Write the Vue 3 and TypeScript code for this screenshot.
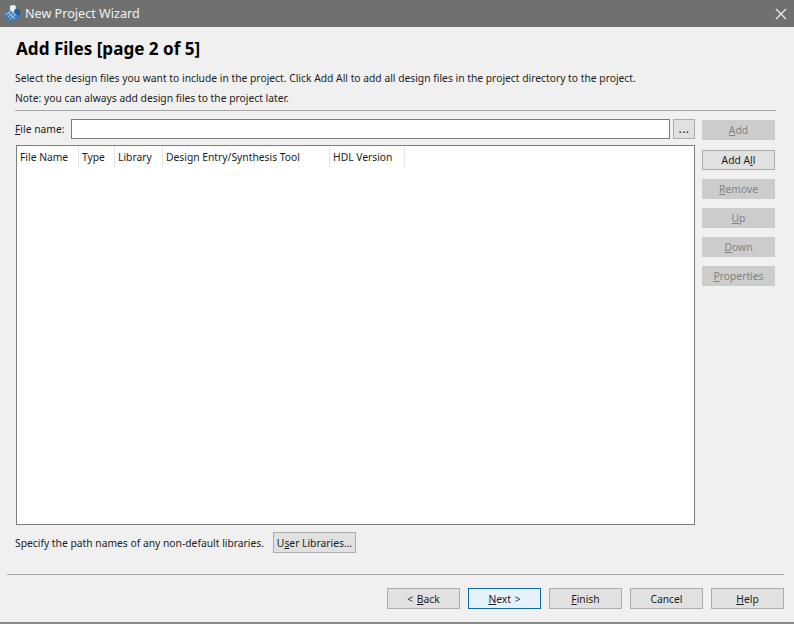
<script setup lang="ts">
interface Btn { pre?: string; key: string; post: string; disabled?: boolean }
const columns = [
  { label: 'File Name', width: 62 },
  { label: 'Type', width: 36 },
  { label: 'Library', width: 48 },
  { label: 'Design Entry/Synthesis Tool', width: 167 },
  { label: 'HDL Version', width: 75 },
]
const side: Btn[] = [
  { key: 'A', post: 'dd', disabled: true },
  { pre: 'Add A', key: 'l', post: 'l' },
  { key: 'R', post: 'emove', disabled: true },
  { key: 'U', post: 'p', disabled: true },
  { key: 'D', post: 'own', disabled: true },
  { key: 'P', post: 'roperties', disabled: true },
]
const footer: (Btn & { primary?: boolean })[] = [
  { pre: '< ', key: 'B', post: 'ack' },
  { key: 'N', post: 'ext >', primary: true },
  { key: 'F', post: 'inish' },
  { pre: 'Cancel', key: '', post: '' },
  { key: 'H', post: 'elp' },
]
</script>

<template>
  <div class="window">
    <header class="titlebar">
      <svg class="logo" width="20" height="20" viewBox="0 0 20 20">
        <path d="M1 11 L10 4 L18 12 L11 18 L7 17 Z" fill="#3f7dbd" />
        <path d="M3.5 11 L10 6 M6 13 L12 8 M8 15 L14 10 M6 8.500 L13 15 M9 6.500 L15 12" stroke="#b5d3ec" stroke-width="0.9" fill="none" />
        <path d="M8 1.500 L13 1 L15 6 L11 8 L8 6 Z" fill="#e9eff6" />
        <path d="M13 5 L16 4 L19 9 L16 13 L12 8 Z" fill="#2a5f9c" />
      </svg>
      <span class="title">New Project Wizard</span>
      <svg class="close" width="12" height="12" viewBox="0 0 12 12">
        <path d="M1 1 L11 11 M11 1 L1 11" stroke="#f2f2f2" stroke-width="1.1" fill="none" />
      </svg>
    </header>

    <main class="body">
      <h1 class="heading">Add Files [page 2 of 5]</h1>
      <p class="line first">Select the design files you want to include in the project. Click Add All to add all design files in the project directory to the project.</p>
      <p class="line">Note: you can always add design files to the project later.</p>
      <hr class="rule" />

      <div class="columns">
        <div class="left">
          <div class="file-row">
            <label class="file-label"><u>F</u>ile name:</label>
            <input class="file-input" type="text" />
            <button class="btn browse">...</button>
          </div>
          <div class="table">
            <div class="thead">
              <div v-for="c in columns" :key="c.label" class="th" :style="{ width: c.width + 'px' }">{{ c.label }}</div>
            </div>
          </div>
          <div class="lib-row">
            <span>Specify the path names of any non-default libraries.</span>
            <button class="btn lib">U<u>s</u>er Libraries...</button>
          </div>
        </div>
        <div class="side">
          <button v-for="(b, i) in side" :key="i" class="btn side-btn" :class="{ disabled: b.disabled }">{{ b.pre }}<u>{{ b.key }}</u>{{ b.post }}</button>
        </div>
      </div>
    </main>

    <footer class="footer">
      <hr class="rule bottom" />
      <div class="actions">
        <button v-for="(b, i) in footer" :key="i" class="btn foot-btn" :class="{ primary: b.primary }">{{ b.pre }}<u v-if="b.key">{{ b.key }}</u>{{ b.post }}</button>
      </div>
    </footer>
  </div>
</template>

<style>
html, body { margin: 0; background: #f0f0f0; }
</style>

<style scoped>
.window {
  width: 794px;
  height: 624px;
  display: flex;
  flex-direction: column;
  background: #f0f0f0;
  font-family: "Noto Sans", sans-serif;
  font-size: 10.3px;
  color: #1c1c1c;
  overflow: hidden;
  box-sizing: border-box;
  border-bottom: 2px solid #8c8c8c;
}
.titlebar {
  height: 27px;
  flex: none;
  background: #707070;
  display: flex;
  align-items: center;
  padding: 0 7px 0 2px;
  color: #f0f0f0;
}
.logo { flex: none; }
.title { margin-left: 3px; font-size: 12.6px; }
.close { margin-left: auto; }
.body { flex: 1; padding: 0 18px 0 15px; display: flex; flex-direction: column; min-height: 0; }
.heading { margin: 12px 0 0 1px; font-size: 17.1px; line-height: 20px; font-weight: 700; color: #000; }
.line { margin: 0; line-height: 16px; white-space: nowrap; }
.line.first { margin-top: 11px; margin-bottom: 4px; }
.rule { margin: 0; border: 0; height: 1px; background: #a5a5a5; flex: none; }
.body > .rule { margin-top: 4px; }
.columns { flex: 1; display: flex; gap: 7px; min-height: 0; }
.left { width: 680px; display: flex; flex-direction: column; }
.file-row { display: flex; align-items: center; margin-top: 8px; height: 20px; }
.file-label { width: 56px; flex: none; }
.file-input {
  width: 599px;
  height: 20px;
  box-sizing: border-box;
  border: 1px solid #7a7a7a;
  background: #fff;
  padding: 0;
  outline: none;
}
.btn {
  font: inherit;
  color: #1c1c1c;
  background: #e1e1e1;
  border: 1px solid #adadad;
  box-sizing: border-box;
  padding: 0;
  margin: 0;
}
.browse { width: 22px; height: 20px; margin-left: 3px; line-height: 18px; font-size: 12px; letter-spacing: 0.5px; }
.table {
  margin: 6px 0 0 1px;
  width: 679px;
  height: 380px;
  box-sizing: border-box;
  border: 1px solid #7f7f7f;
  background: #fff;
}
.thead { display: flex; height: 22px; }
.th {
  box-sizing: border-box;
  padding: 4px 0 0 3px;
  line-height: 14px;
  border-right: 1px solid #e6e6e6;
  white-space: nowrap;
}
.lib-row { display: flex; align-items: center; margin-top: 7px; height: 21px; }
.lib { margin-left: 9px; width: 83px; height: 21px; }
.side { width: 73px; display: flex; flex-direction: column; gap: 9px; padding-top: 9px; }
.side-btn { height: 20px; flex: none; }
.side-btn:first-child { margin-bottom: 1px; }
.side-btn.disabled { background: #cccccc; border-color: #cccccc; color: #838383; }
.footer { flex: none; padding: 0 10px 0 7px; height: 48px; }
.actions { display: flex; justify-content: flex-end; gap: 8px; margin-top: 13px; }
.foot-btn { width: 73px; height: 21px; word-spacing: 1px; }
.foot-btn.primary { background: #e5f1fb; border-color: #0f69a8; }
</style>
